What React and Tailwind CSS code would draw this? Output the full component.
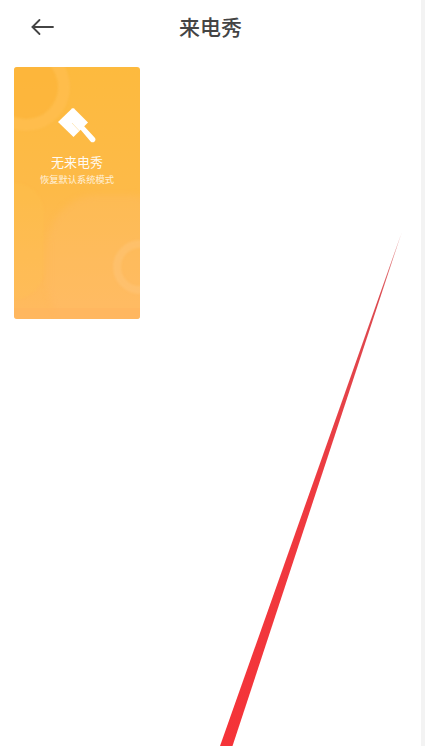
export default function App() {
  return (
    <div className="relative flex h-[746px] w-[425px] overflow-hidden bg-white font-['Noto_Sans_CJK_SC','Noto_Sans',sans-serif]">
      <main className="flex-1">
        <header className="relative flex h-[55px] items-center justify-center pb-[3px]">
          <svg className="absolute left-[31px] top-[18px]" width="23" height="18" viewBox="0 0 23 18" fill="none" stroke="#444444" strokeWidth="1.8" strokeLinecap="round" strokeLinejoin="round">
            <path d="M1.5 9H22" />
            <path d="M8.5 2L1.5 9L8.5 16" />
          </svg>
          <h1 className="text-[21px] font-medium leading-none text-[#444444]">来电秀</h1>
        </header>
        <section className="pl-[14px] pt-[12px]">
          <div className="relative flex h-[252px] w-[126px] flex-col items-center overflow-hidden rounded-[3px] bg-gradient-to-b from-[#fdba3e] via-[#fdba48] to-[#ffba60] pt-[39px]">
            <div className="absolute -left-[32px] -top-[24px] h-[88px] w-[88px] rounded-full border-[12px] border-[#ffc45c]/50 bg-[#fcb138]/45 blur-[1px]" />
            <div className="absolute -left-[28px] top-[116px] h-[116px] w-[58px] rounded-full bg-[#ffc450]/25 blur-[1px]" />
            <div className="absolute left-[34px] top-[128px] h-[140px] w-[130px] rounded-[50px] bg-[#ffbd6e]/30 blur-[3px]" />
            <div className="absolute left-[99px] top-[173px] h-[54px] w-[54px] rounded-full border-[8px] border-[#ffcb88]/35 blur-[1px]" />
            <div className="absolute bottom-0 left-0 h-[11px] w-full bg-[#ffb35e]/50" />
            <svg className="relative" width="40" height="40" viewBox="0 0 40 40" fill="white">
              <path d="M1 16L15 2.5C15.6 2 16.4 2 17 2.5L31 16.5L16.5 31Z" />
              <path d="M23 23L26.5 19.5L37.6 31.4C38.8 32.6 38.8 34.2 37.6 35.4C36.4 36.6 34.8 36.6 33.6 35.4Z" />
              <path d="M15 17L22.5 25" stroke="#fde3b0" strokeWidth="0.8" fill="none" />
            </svg>
            <p className="relative mt-[7px] text-[13px] leading-[17px] text-white/95">无来电秀</p>
            <p className="relative mt-[4px] text-[9.25px] leading-[11px] text-white/80">恢复默认系统模式</p>
          </div>
        </section>
      </main>
      <aside className="w-[4px] bg-[#f3f3f3]" />
      <svg className="pointer-events-none absolute left-0 top-0" width="425" height="746" viewBox="0 0 425 746">
        <defs>
          <linearGradient id="wedge" x1="401" y1="234" x2="226" y2="746" gradientUnits="userSpaceOnUse">
            <stop offset="0" stopColor="#e08a8a" />
            <stop offset="0.12" stopColor="#dc4a50" />
            <stop offset="0.5" stopColor="#ee3a40" />
            <stop offset="1" stopColor="#f53338" />
          </linearGradient>
        </defs>
        <path d="M401.5 233L232.5 746H220Z" fill="url(#wedge)" />
      </svg>
    </div>
  );
}
